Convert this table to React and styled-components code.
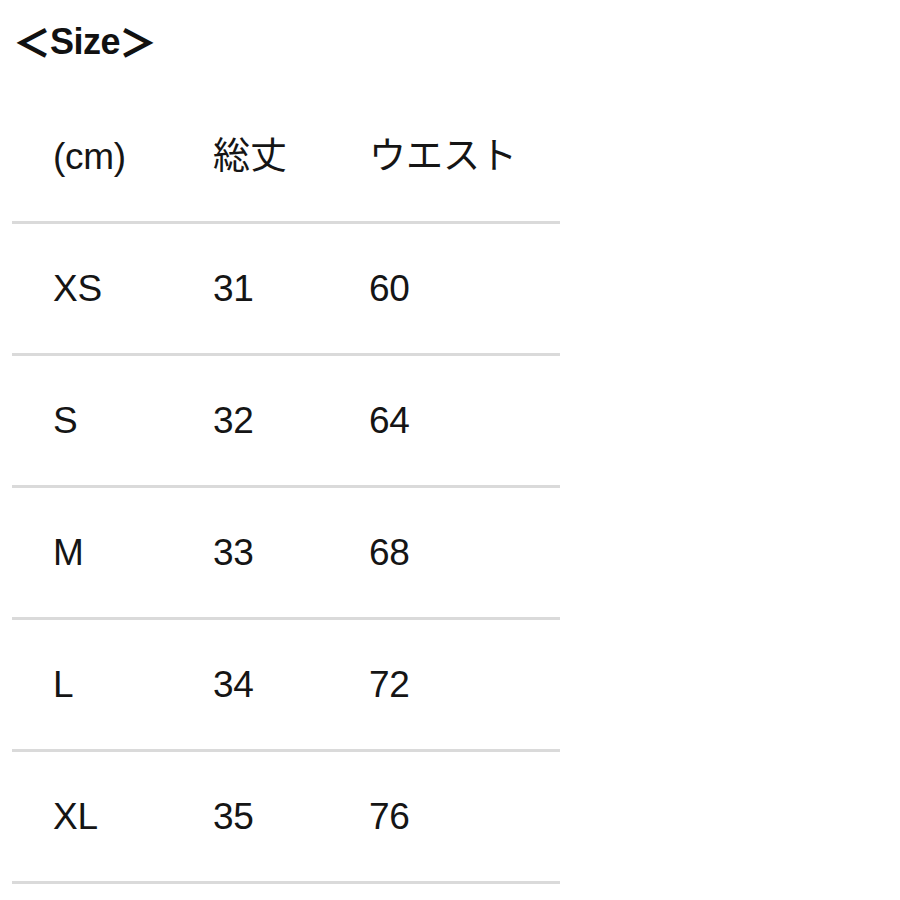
import React from "react";
import styled, { createGlobalStyle } from "styled-components";

const Global = createGlobalStyle`
  html, body { margin: 0; padding: 0; background: #ffffff; }
  body { font-family: "Liberation Sans", "Noto Sans CJK JP", sans-serif; color: #111; }
`;

const Page = styled.div`
  width: 900px;
  min-height: 900px;
  background: #fff;
`;

const Title = styled.h1`
  margin: 0;
  height: 36px;
  padding: 24px 0 32px 13px;
  font-family: "Liberation Sans", "Noto Sans CJK JP", sans-serif;
  font-weight: 700;
  font-size: 36px;
  line-height: 36px;
  color: #111;
  letter-spacing: -0.5px;
  white-space: nowrap;
`;

const Bracket = styled.span`
  font-family: "Noto Sans CJK JP", sans-serif;
  font-weight: 900;
  font-size: 38px;
  line-height: 0;
  vertical-align: -3px;
  letter-spacing: 0;
  margin: ${(p) => (p.$right ? "0 0 0 -1px" : "0 -1px 0 0")};
`;

const Table = styled.div`
  margin-left: 12px;
  width: 548px;
`;

const Row = styled.div`
  display: grid;
  grid-template-columns: 160px 156px 1fr;
  align-items: center;
  height: 129px;
  padding-left: 41px;
  border-bottom: 3px solid #dadada;
`;

const Cell = styled.div`
  font-family: "Liberation Sans", "Noto Sans CJK JP", sans-serif;
  font-size: 37px;
  line-height: 1;
  color: #151515;
  white-space: nowrap;
  letter-spacing: ${(p) => (p.$jp ? "0" : "-0.3px")};
`;

const header = ["(cm)", "総丈", "ウエスト"];
const rows = [
  ["XS", "31", "60"],
  ["S", "32", "64"],
  ["M", "33", "68"],
  ["L", "34", "72"],
  ["XL", "35", "76"],
];

export default function App() {
  return (
    <Page>
      <Global />
      <Title>
        <Bracket>＜</Bracket>Size<Bracket $right>＞</Bracket>
      </Title>
      <Table>
        <Row>
          {header.map((h, i) => (
            <Cell key={i} $jp={i > 0}>{h}</Cell>
          ))}
        </Row>
        {rows.map((r) => (
          <Row key={r[0]}>
            {r.map((c, i) => (
              <Cell key={i}>{c}</Cell>
            ))}
          </Row>
        ))}
      </Table>
    </Page>
  );
}
